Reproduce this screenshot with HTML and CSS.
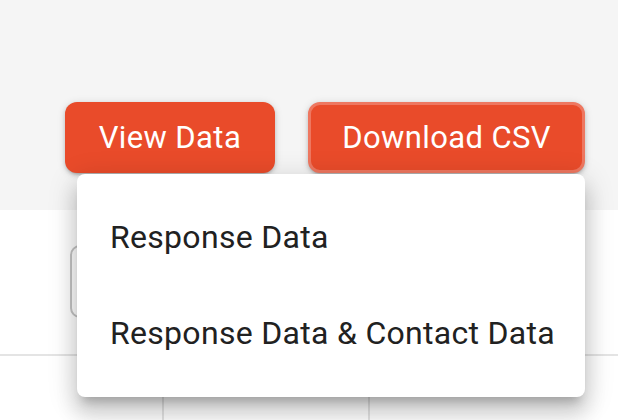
FILE: index.html
```html
<!DOCTYPE html>
<html>
<head>
<meta charset="utf-8">
<link rel="stylesheet" href="styles.css">
</head>
<body>
<div class="toolbar">
  <button class="btn">View Data</button>
  <button class="btn btn-focus">Download CSV</button>
</div>
<div class="content">
  <div class="field"></div>
  <div class="table-row">
    <div class="cell c1"></div>
    <div class="cell c2"></div>
    <div class="cell c3"></div>
  </div>
</div>
<div class="menu">
  <div class="menu-item">Response Data</div>
  <div class="menu-item">Response Data &amp; Contact Data</div>
</div>
</body>
</html>
```
FILE: styles.css
```css
html, body {
  margin: 0;
  padding: 0;
  width: 618px;
  height: 420px;
  overflow: hidden;
  background: #ffffff;
  font-family: Roboto, "Liberation Sans", sans-serif;
}
.toolbar {
  height: 210px;
  box-sizing: border-box;
  background: #f5f5f5;
  display: flex;
  justify-content: flex-end;
  align-items: flex-start;
  gap: 33px;
  padding: 102px 33px 0 0;
}
.btn {
  height: 71px;
  box-sizing: border-box;
  border: none;
  border-radius: 12px;
  background: #e94b2a;
  color: #ffffff;
  font-family: Roboto, "Liberation Sans", sans-serif;
  font-size: 31px;
  letter-spacing: 0.4px;
  padding: 0 34px;
  box-shadow: 0 3px 3px -2px rgba(0,0,0,0.2), 0 2px 4px 0 rgba(0,0,0,0.14), 0 1px 8px 0 rgba(0,0,0,0.12);
}
.btn-focus {
  border: 3px solid #ee7760;
  padding: 0 31px;
}
.field {
  margin: 35px 0 0 70px;
  width: 300px;
  height: 73px;
  box-sizing: border-box;
  border: 2px solid #c4c4c4;
  border-radius: 10px;
}
.table-row {
  margin-top: 36px;
  border-top: 2px solid #e4e4e4;
  display: flex;
  height: 64px;
}
.c1 { width: 162px; border-right: 2px solid #e4e4e4; }
.c2 { width: 204px; border-right: 2px solid #e4e4e4; }
.c3 { flex: 1; }
.menu {
  position: absolute;
  left: 77px;
  top: 174px;
  width: 508px;
  height: 223px;
  box-sizing: border-box;
  background: #ffffff;
  border-radius: 8px;
  padding: 15px 0;
  box-shadow: 0 10px 10px -6px rgba(0,0,0,0.2), 0 16px 20px 2px rgba(0,0,0,0.14), 0 6px 28px 4px rgba(0,0,0,0.12);
}
.menu-item {
  height: 96px;
  display: flex;
  align-items: center;
  padding-left: 33px;
  font-size: 32px;
  color: #212121;
  letter-spacing: 0.3px;
}
```
